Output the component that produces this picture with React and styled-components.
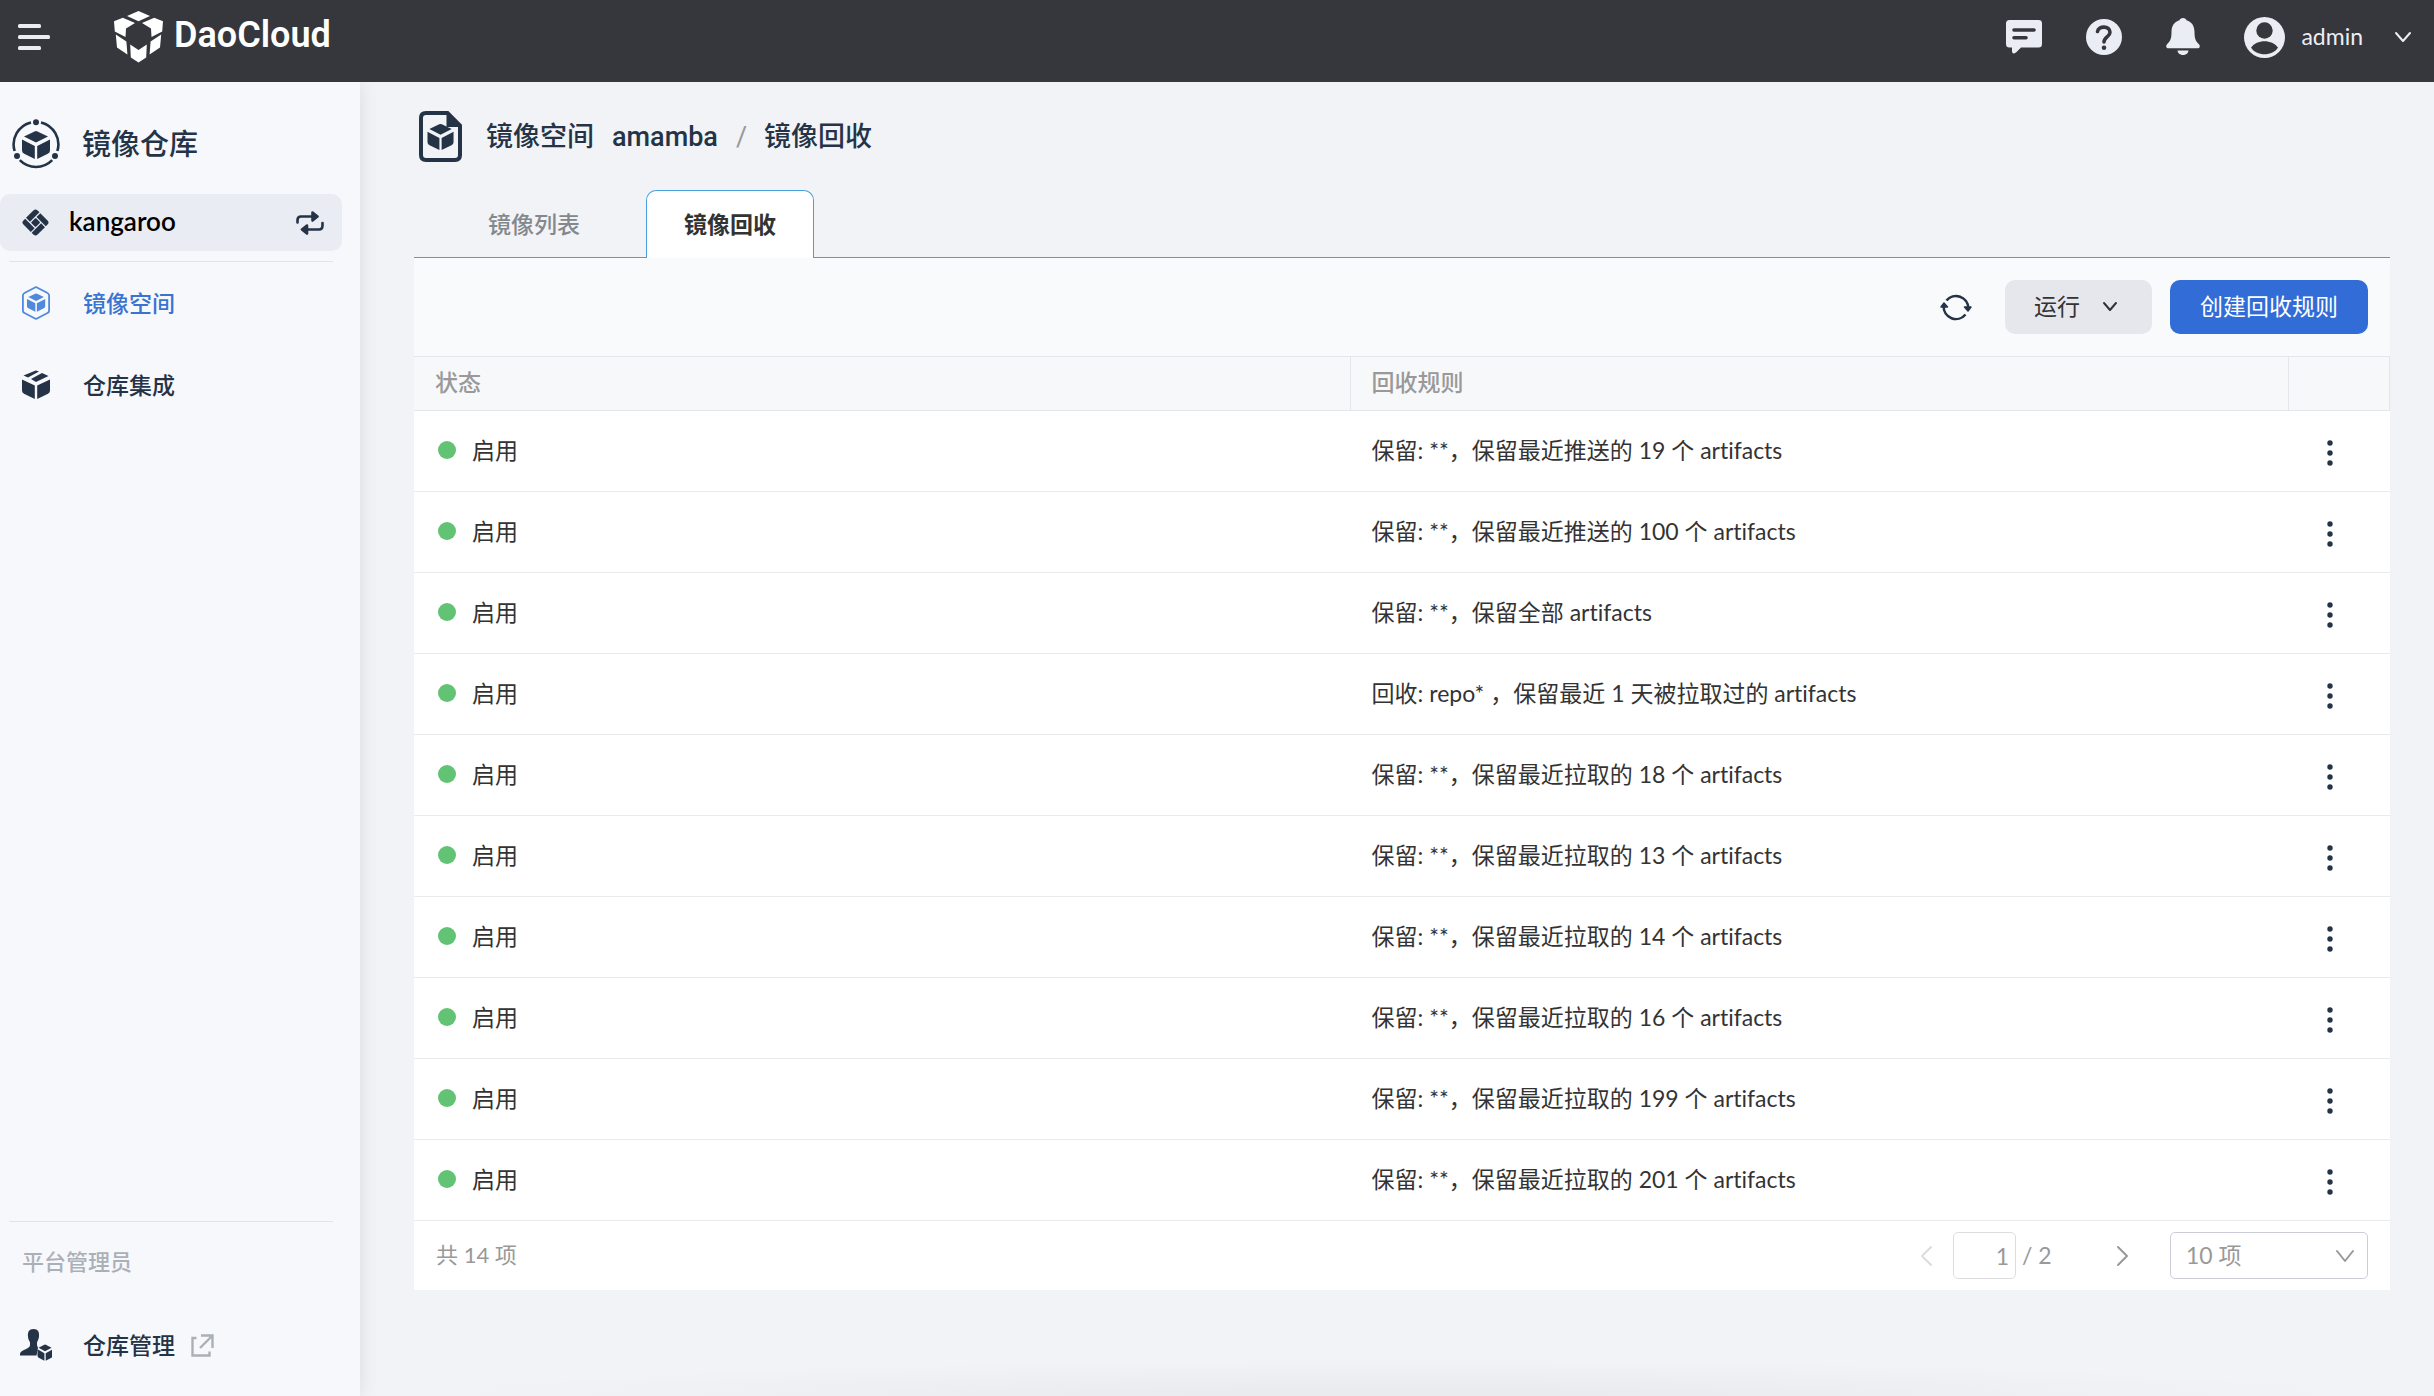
import React, { useState } from 'react';
import styled, { createGlobalStyle } from 'styled-components';

const GlobalStyle = createGlobalStyle`
  * {
    box-sizing: border-box;
  }

  body {
    margin: 0;
    background: #f1f3f6;
    color: #333;
    font-family: Lato, 'Noto Sans CJK SC', sans-serif;
    font-size: 23px;
    font-variant-ligatures: none;
    line-height: 32px;
  }

  button,
  input,
  select {
    font: inherit;
    color: inherit;
  }

  button {
    border: 0;
    padding: 0;
    background: none;
    cursor: pointer;
  }

  a {
    color: inherit;
    text-decoration: none;
  }

  svg {
    display: block;
    flex: none;
  }
`;

const Page = styled.div`
  display: flex;
  flex-direction: column;
  min-height: 100vh;
`;

const Header = styled.header`
  display: flex;
  align-items: center;
  height: 82px;
  padding: 0 22px 8px 18px;
  background: #36373c;
  color: #ebedf5;
`;

const Logo = styled.a`
  display: flex;
  align-items: center;
  gap: 11px;
  margin-left: 64px;
  color: #fff;
  font-family: Roboto, sans-serif;
  font-size: 36px;
  font-weight: 600;

  span {
    padding-bottom: 4px;
  }
`;

const HeaderTools = styled.div`
  display: flex;
  align-items: center;
  gap: 44px;
  margin-left: auto;
`;

const UserButton = styled.button`
  display: flex;
  align-items: center;
  gap: 16px;

  span {
    padding-bottom: 2px;
  }

  svg:last-child {
    margin-left: 15px;
  }
`;

const Body = styled.div`
  display: flex;
  flex: 1;
`;

const Sidebar = styled.aside`
  display: flex;
  flex-direction: column;
  flex: none;
  width: 360px;
  padding: 32px 18px 10px 0;
  background: #f7f8fc;
  box-shadow: 0 0 18px rgba(0, 0, 0, 0.1);
  color: #253347;
  clip-path: inset(0 -30px 0 0);
`;

const SidebarTitle = styled.h1`
  display: flex;
  align-items: center;
  gap: 22px;
  margin: 0;
  padding-left: 12px;
  height: 60px;
  font-size: 29px;
  font-weight: 500;
`;

const Workspace = styled.button`
  display: flex;
  align-items: center;
  gap: 20px;
  height: 57px;
  margin-top: 20px;
  padding: 0 18px 0 22px;
  border-radius: 10px;
  background: #eaecf4;
  color: #253347;
`;

const WorkspaceName = styled.span`
  flex: 1;
  padding-bottom: 4px;
  color: #000;
  font-size: 26px;
  font-weight: 600;
  text-align: left;
`;

const Divider = styled.hr`
  width: auto;
  height: 1px;
  margin: ${({ $top }) => ($top ? '10px 9px 0' : '0 9px')};
  border: 0;
  background: #e2e4ea;
`;

const Nav = styled.nav`
  display: flex;
  flex-direction: column;
`;

const NavItem = styled.a`
  display: flex;
  align-items: center;
  height: 82px;
  padding-left: 20px;
  color: ${({ $active }) => ($active ? '#3b73d1' : '#253347')};
  font-weight: 500;
`;

const NavIcon = styled.span`
  display: flex;
  width: 63px;
`;

const ExternalMark = styled.span`
  margin-left: 16px;
  color: #abb0b8;
`;

const SidebarFooter = styled.div`
  margin-top: auto;
`;

const Role = styled.div`
  padding: 24px 0 26px 22px;
  color: #abb0b8;
  font-size: 22px;
  font-weight: 500;
`;

const Main = styled.main`
  flex: 1;
  min-width: 0;
  padding: 29px 44px 0 54px;
  background: radial-gradient(46% 36px at 50% 100%, #eaebee 20%, #f1f3f6);
`;

const Breadcrumb = styled.div`
  display: flex;
  align-items: center;
  height: 51px;
  padding-left: 5px;
  color: #253347;
  font-family: Roboto, 'Noto Sans CJK SC', sans-serif;
  font-size: 27px;
  font-weight: 500;

  svg {
    margin-right: 24px;
  }
`;

const Crumb = styled.a`
  margin-right: 18px;
`;

const Slash = styled.span`
  margin-right: 17px;
  color: #999;
  font-weight: 400;
`;

const Tabs = styled.div`
  display: flex;
  gap: 28px;
  margin-top: 28px;
  padding-left: 36px;
  border-bottom: 1px solid #479fe0;
`;

const Tab = styled.button`
  height: 68px;
  margin-bottom: -1px;
  padding: 0 37px 2px;
  border: 1px solid ${({ $active }) => ($active ? '#479fe0' : 'transparent')};
  border-bottom: 0;
  border-radius: 10px 10px 0 0;
  background: ${({ $active }) => ($active ? '#fff' : 'none')};
  color: ${({ $active }) => ($active ? '#333' : '#84888c')};
  font-weight: ${({ $active }) => ($active ? 600 : 500)};
`;

const Toolbar = styled.div`
  display: flex;
  align-items: center;
  justify-content: flex-end;
  height: 98px;
  padding: 0 22px;
  background: #f9fafc;
`;

const RefreshButton = styled.button`
  margin-right: 33px;
  color: #253347;
`;

const Button = styled.button`
  display: flex;
  align-items: center;
  justify-content: center;
  gap: 22px;
  height: 54px;
  padding: ${({ $primary }) => ($primary ? '0 30px 2px' : '0 34px 2px 29px')};
  border-radius: 10px;
  background: ${({ $primary }) => ($primary ? '#326cd6' : '#e6e7ec')};
  color: ${({ $primary }) => ($primary ? '#fff' : '#333')};

  & + & {
    margin-left: 18px;
  }
`;

const Table = styled.table`
  width: 100%;
  border-collapse: separate;
  border-spacing: 0;
  table-layout: fixed;
  background: #fff;
`;

const HeadCell = styled.th`
  width: ${({ $width }) => $width || 'auto'};
  height: 55px;
  padding: 0 21px 3px;
  border: solid #e4e6ec;
  border-width: 1px 1px 1px 0;
  background: #f7f8fa;
  color: #999;
  font-weight: 500;
  text-align: left;
`;

const Cell = styled.td`
  height: 81px;
  padding: 0 21px 2px;
  border-bottom: 1px solid #e9eaed;
`;

const Status = styled.div`
  display: flex;
  align-items: center;
  gap: 16px;
  padding-left: 3px;

  &::before {
    content: '';
    width: 18px;
    height: 18px;
    border-radius: 50%;
    background: #62c374;
  }
`;

const MoreButton = styled.button`
  display: block;
  padding: 4px 17px 0;
  color: #253347;
`;

const Pagination = styled.div`
  display: flex;
  align-items: center;
  height: 69px;
  padding: 0 22px;
  background: #fff;
  color: #999;
`;

const Total = styled.span`
  margin-right: auto;
  padding-bottom: 2px;
  font-size: 22px;
`;

const PageButton = styled.button`
  padding: 0 2px;
  color: #999;

  &:disabled {
    color: #ddd;
  }
`;

const PageInput = styled.input`
  width: 63px;
  height: 47px;
  margin: 0 6px 0 18px;
  padding: 0 6px;
  border: 1px solid #ddd;
  border-radius: 5px;
  background: #fff;
  text-align: right;
`;

const PageCount = styled.span`
  width: 92px;
  padding-bottom: 2px;
`;

const PageSize = styled.label`
  display: grid;
  align-items: center;
  width: 198px;
  margin-left: 39px;

  select,
  svg {
    grid-area: 1 / 1;
  }

  svg {
    justify-self: end;
    margin-right: 13px;
    pointer-events: none;
  }
`;

const Select = styled.select`
  width: 100%;
  height: 47px;
  padding: 0 15px 2px;
  border: 1px solid #cccdd8;
  border-radius: 5px;
  background: #fff;
  appearance: none;
`;

const Chevron = ({ width = 16, height = 10, stroke = 2, dir = 'down' }) => {
  const points = {
    down: `2,2 ${width / 2},${height - 2} ${width - 2},2`,
    left: `${width - 2},2 2,${height / 2} ${width - 2},${height - 2}`,
    right: `2,2 ${width - 2},${height / 2} 2,${height - 2}`,
  };
  return (
    <svg width={width} height={height} fill="none" stroke="currentColor" strokeWidth={stroke} strokeLinecap="round" strokeLinejoin="round">
      <polyline points={points[dir]} />
    </svg>
  );
};

// solid cube, drawn in a 28 x 28 box
const Cube = () => (
  <>
    <path d="M12.600.4q1.400-.6 2.800 0L26 5.400 14 11.600 2 5.400Z" />
    <path d="M0 8.400 12.800 15v13L2.200 22.800Q0 21.800 0 19.600Z" />
    <path d="M28 8.400 15.200 15v13l10.600-5.200q2.200-1 2.200-3.200Z" />
  </>
);

const MenuIcon = () => (
  <svg width="32" height="26" fill="currentColor">
    <rect width="23" height="4" rx="1.5" />
    <rect y="11" width="32" height="4" rx="1.5" />
    <rect y="22" width="23" height="4" rx="1.5" />
  </svg>
);

const LogoMark = () => (
  <svg width="49" height="52" viewBox="0 0 49 52" fill="currentColor">
    <path d="M24.500 0 36 5 24.500 10.200 13 5Z" />
    <path d="M0 10.200 8.800 6.800 21 12 12 17.500 11.500 26 .8 20.400Z" />
    <path d="M49 10.200 40.200 6.800 28 12l9 5.500.5 8.500 10.700-5.600Z" />
    <path d="M1.800 23.600 12.400 30.400l1 13L3 36.600Z" />
    <path d="M47.200 23.600 36.600 30.400l-1 13L46 36.600Z" />
    <path d="m16.200 33.500 8.300 5.500 8.300-5.500-.6 12.900-7.700 5.200-7.700-5.200Z" />
  </svg>
);

const ChatIcon = () => (
  <svg width="36" height="34" viewBox="0 0 36 34">
    <path fill="currentColor" d="M3.500 0h29A3.500 3.500 0 0 1 36 3.500v20.500a3.500 3.500 0 0 1-3.500 3.500H15l-5 5q-3.500 2.500-4-1v-4H3.500A3.500 3.500 0 0 1 0 24V3.500A3.500 3.500 0 0 1 3.500 0Z" />
    <path stroke="#36373c" strokeWidth="3.600" strokeLinecap="round" d="M8 10h20M8 17.700h12" />
  </svg>
);

const HelpIcon = () => (
  <svg width="36" height="36" viewBox="0 0 36 36" fill="none">
    <circle cx="18" cy="18" r="18" fill="currentColor" />
    <path stroke="#36373c" strokeWidth="3.600" strokeLinecap="round" d="M11.500 12.500C12.500 6.500 24 6.500 24 13.300c0 4.700-6 4.500-6 9.700" />
    <circle cx="18" cy="28.800" r="2.300" fill="#36373c" />
  </svg>
);

const BellIcon = () => (
  <svg width="34" height="38" viewBox="0 0 34 38" fill="currentColor">
    <path d="M17 0c2 0 3 1 3.500 2.200C26 4 28.500 8 28.500 14c0 6 1 9 4 11.800 1 1 1.500 2 1.200 3.200-.3.900-1 1.300-2 1.300H2.300c-1 0-1.700-.4-2-1.300-.3-1.200.2-2.200 1.200-3.200 3-2.800 4-5.800 4-11.800 0-6 2.500-10 8-11.800C14 1 15 0 17 0Z" />
    <path d="M11.500 32.500h11c-.5 6-10.500 6-11 0Z" />
  </svg>
);

const AvatarIcon = () => (
  <svg width="41" height="41" viewBox="0 0 41 41">
    <circle cx="20.500" cy="20.500" r="20.500" fill="currentColor" />
    <circle cx="20.500" cy="13.500" r="8.200" fill="#36373c" />
    <path fill="#36373c" d="M7 30.500c6-8.500 21-8.500 27 0-5 9-22 9-27 0Z" />
  </svg>
);

const RegistryIcon = () => (
  <svg width="48" height="50" viewBox="0 0 48 50" fill="currentColor">
    <g fill="none" stroke="currentColor" strokeWidth="2.600">
      <path d="M19 3.400A22.700 22.700 0 0 0 2.600 32" />
      <path d="M29 3.400A22.700 22.700 0 0 1 45.400 32" />
      <path d="M7.800 41.200a22.700 22.700 0 0 0 32.400 0" />
    </g>
    <circle cx="24" cy="3.200" r="3" />
    <circle cx="5" cy="37" r="3" />
    <circle cx="43" cy="37" r="3" />
    <g transform="translate(10 12)">
      <Cube />
    </g>
  </svg>
);

const WorkspaceIcon = () => (
  <svg width="27" height="27" viewBox="-13.500 -13.500 27 27" fill="currentColor">
    <g transform="scale(-1 1) rotate(45)">
      <path d="M-7-10H3.400v5.600H-10V-7q0-3 3-3Z" />
      <path d="M4.600-10H7q3 0 3 3V3.400H4.600Z" />
      <path d="M-3.400 4.600H10V7q0 3-3 3H-3.400Z" />
      <path d="M-10-3.200h5.400V10H-7q-3 0-3-3Z" />
      <rect x="-3.400" y="-3.200" width="6.800" height="6.600" rx="1" />
    </g>
  </svg>
);

const SwapIcon = () => (
  <svg width="28" height="24" viewBox="0 0 28 24" fill="none" stroke="currentColor" strokeWidth="2.600" strokeLinecap="round">
    <path d="M1.500 11.500V9Q1.500 5.500 5 5.500h13M26.500 12v2.500q0 4-3.500 4H10" />
    <path d="m16.500 1.500 5 4-5 4ZM11 14.500l-5 4 5 4Z" fill="currentColor" strokeLinejoin="round" />
  </svg>
);

const SpaceIcon = () => (
  <svg width="32" height="34" viewBox="-2 0 32 34" fill="#5088dc">
    <path fill="none" stroke="#5088dc" strokeWidth="1.800" d="M12.500 1.700q1.500-1 3 0l10 5.300q1.600.8 1.600 2.600v14.800q0 1.800-1.600 2.600l-10 5.300q-1.500 1-3 0l-10-5.300Q.9 26.200.9 24.400V9.600Q.9 7.800 2.500 7Z" />
    <g transform="translate(5 7.500) scale(.65)">
      <Cube />
    </g>
  </svg>
);

const PackageIcon = () => (
  <svg width="32" height="30" viewBox="-2 0 32 30" fill="currentColor">
    <path d="M12.500.900q1.500-.8 3 0l1.500.7L6 7.400 1.500 5.400Z" />
    <path d="m20 3 6.500 2.900L14 12 9 9Z" />
    <path d="M0 9.400 12.800 15.500V29L2 23.800Q0 22.800 0 20.600Z" />
    <path d="M28 9.400 15.200 15.500V29L26 23.800q2-1 2-3.200Z" />
  </svg>
);

const AdminIcon = () => (
  <svg width="32" height="32" viewBox="0 0 32 32" fill="currentColor">
    <path d="M13.500 0C18 0 19.500 3 19 7.500c-.3 3-1.500 4-2 6v2.500l1 3-1.500 7.500H0c0-3 .5-3.500 3-5 4-2 7-3 7-5.500V13.500c-.5-2-2-3-2-6C7.500 3 9 0 13.500 0Z" />
    <g transform="translate(17.500 15.500) scale(.54 .58)">
      <Cube />
    </g>
  </svg>
);

const ExternalIcon = () => (
  <svg width="23" height="23" viewBox="0 0 23 23" fill="none" stroke="currentColor" strokeWidth="2.400">
    <path d="M5.500 4H1.500v17.500h17V17.500M10 1.500h11.500V14M9 14 21 2" />
  </svg>
);

const FileCubeIcon = () => (
  <svg width="43" height="51" viewBox="0 0 43 51" fill="currentColor">
    <path fill="none" stroke="currentColor" strokeWidth="4" d="M7 2h21.500L41 14.500V44q0 5-5 5H7q-5 0-5-5V7q0-5 5-5Z" />
    <path d="M27.500 1v15H42Z" />
    <g transform="translate(8.500 13) scale(.93)">
      <Cube />
    </g>
  </svg>
);

const RefreshIcon = () => (
  <svg width="32" height="28" viewBox="0 0 32 28" fill="none" stroke="currentColor" strokeWidth="2.600">
    <path d="M6.500 7.500A12.300 12.300 0 0 1 28.300 15M25.500 21.500A12.300 12.300 0 0 1 3.700 13" />
    <path d="m24.500 14 3.500 4 3-4ZM1 14l3-4 3.500 4Z" fill="currentColor" strokeLinejoin="round" strokeWidth="1.500" />
  </svg>
);

const MoreIcon = () => (
  <svg width="6" height="28" fill="currentColor">
    <circle cx="3" cy="5" r="2.700" />
    <circle cx="3" cy="15" r="2.700" />
    <circle cx="3" cy="25" r="2.700" />
  </svg>
);

const rules = [
  '保留: **，保留最近推送的 19 个 artifacts',
  '保留: **，保留最近推送的 100 个 artifacts',
  '保留: **，保留全部 artifacts',
  '回收: repo* ，保留最近 1 天被拉取过的 artifacts',
  '保留: **，保留最近拉取的 18 个 artifacts',
  '保留: **，保留最近拉取的 13 个 artifacts',
  '保留: **，保留最近拉取的 14 个 artifacts',
  '保留: **，保留最近拉取的 16 个 artifacts',
  '保留: **，保留最近拉取的 199 个 artifacts',
  '保留: **，保留最近拉取的 201 个 artifacts',
];

const tabs = ['镜像列表', '镜像回收'];

function App() {
  const [tab, setTab] = useState('镜像回收');
  const [page, setPage] = useState('1');

  return (
    <Page lang="zh-CN">
      <GlobalStyle />
      <Header>
        <button aria-label="菜单"><MenuIcon /></button>
        <Logo href="#">
          <LogoMark />
          <span>DaoCloud</span>
        </Logo>
        <HeaderTools>
          <button aria-label="消息"><ChatIcon /></button>
          <button aria-label="帮助"><HelpIcon /></button>
          <button aria-label="通知"><BellIcon /></button>
          <UserButton>
            <AvatarIcon />
            <span>admin</span>
            <Chevron width={18} height={12} />
          </UserButton>
        </HeaderTools>
      </Header>
      <Body>
        <Sidebar>
          <SidebarTitle>
            <RegistryIcon />
            镜像仓库
          </SidebarTitle>
          <Workspace>
            <WorkspaceIcon />
            <WorkspaceName>kangaroo</WorkspaceName>
            <SwapIcon />
          </Workspace>
          <Divider $top />
          <Nav>
            <NavItem href="#" $active>
              <NavIcon><SpaceIcon /></NavIcon>
              镜像空间
            </NavItem>
            <NavItem href="#">
              <NavIcon><PackageIcon /></NavIcon>
              仓库集成
            </NavItem>
          </Nav>
          <SidebarFooter>
            <Divider />
            <Role>平台管理员</Role>
            <NavItem href="#">
              <NavIcon><AdminIcon /></NavIcon>
              仓库管理
              <ExternalMark><ExternalIcon /></ExternalMark>
            </NavItem>
          </SidebarFooter>
        </Sidebar>
        <Main>
          <Breadcrumb>
            <FileCubeIcon />
            <Crumb href="#">镜像空间</Crumb>
            <Crumb href="#">amamba</Crumb>
            <Slash>/</Slash>
            <span>镜像回收</span>
          </Breadcrumb>
          <Tabs role="tablist">
            {tabs.map(name => (
              <Tab key={name} role="tab" $active={name === tab} onClick={() => setTab(name)}>
                {name}
              </Tab>
            ))}
          </Tabs>
          <Toolbar>
            <RefreshButton aria-label="刷新"><RefreshIcon /></RefreshButton>
            <Button>
              运行
              <Chevron width={16} height={11} />
            </Button>
            <Button $primary>创建回收规则</Button>
          </Toolbar>
          <Table>
            <thead>
              <tr>
                <HeadCell $width="47.4%">状态</HeadCell>
                <HeadCell>回收规则</HeadCell>
                <HeadCell $width="101px" aria-label="操作" />
              </tr>
            </thead>
            <tbody>
              {rules.map(rule => (
                <tr key={rule}>
                  <Cell><Status>启用</Status></Cell>
                  <Cell>{rule}</Cell>
                  <Cell>
                    <MoreButton aria-label="更多"><MoreIcon /></MoreButton>
                  </Cell>
                </tr>
              ))}
            </tbody>
          </Table>
          <Pagination>
            <Total>共 14 项</Total>
            <PageButton aria-label="上一页" disabled>
              <Chevron width={13} height={22} dir="left" />
            </PageButton>
            <PageInput aria-label="页码" value={page} onChange={e => setPage(e.target.value)} />
            <PageCount>/ 2</PageCount>
            <PageButton aria-label="下一页">
              <Chevron width={13} height={22} dir="right" />
            </PageButton>
            <PageSize>
              <Select aria-label="每页条数" defaultValue="10">
                <option value="10">10 项</option>
                <option value="20">20 项</option>
                <option value="50">50 项</option>
              </Select>
              <Chevron width={20} height={14} />
            </PageSize>
          </Pagination>
        </Main>
      </Body>
    </Page>
  );
}

export default App;
